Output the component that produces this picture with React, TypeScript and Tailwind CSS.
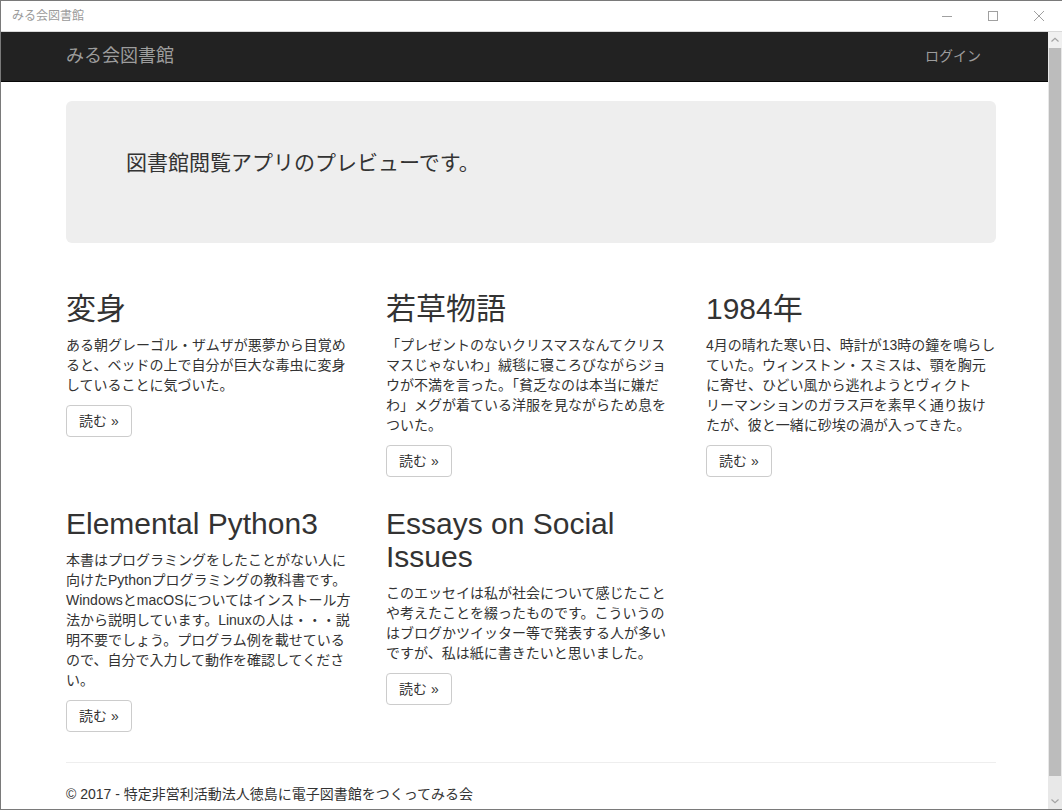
import { Fragment } from 'react'

type Book = {
  title: string
  lines: string[]
}

const books: Book[] = [
  {
    title: '変身',
    lines: [
      'ある朝グレーゴル・ザムザが悪夢から目覚め',
      'ると、ベッドの上で自分が巨大な毒虫に変身',
      'していることに気づいた。',
    ],
  },
  {
    title: '若草物語',
    lines: [
      '「プレゼントのないクリスマスなんてクリス',
      'マスじゃないわ」絨毯に寝ころびながらジョ',
      'ウが不満を言った。「貧乏なのは本当に嫌だ',
      'わ」メグが着ている洋服を見ながらため息を',
      'ついた。',
    ],
  },
  {
    title: '1984年',
    lines: [
      '4月の晴れた寒い日、時計が13時の鐘を鳴らし',
      'ていた。ウィンストン・スミスは、顎を胸元',
      'に寄せ、ひどい風から逃れようとヴィクト',
      'リーマンションのガラス戸を素早く通り抜け',
      'たが、彼と一緒に砂埃の渦が入ってきた。',
    ],
  },
  {
    title: 'Elemental Python3',
    lines: [
      '本書はプログラミングをしたことがない人に',
      '向けたPythonプログラミングの教科書です。',
      'WindowsとmacOSについてはインストール方',
      '法から説明しています。Linuxの人は・・・説',
      '明不要でしょう。プログラム例を載せている',
      'ので、自分で入力して動作を確認してくださ',
      'い。',
    ],
  },
  {
    title: 'Essays on Social Issues',
    lines: [
      'このエッセイは私が社会について感じたこと',
      'や考えたことを綴ったものです。こういうの',
      'はブログかツイッター等で発表する人が多い',
      'ですが、私は紙に書きたいと思いました。',
    ],
  },
]

function TitleBar() {
  return (
    <div className="h-[31px] flex items-center justify-between bg-white border-b border-[#d9d9d9] shrink-0">
      <span className="pl-[11px] text-[12px] text-[#9a9a9a]">みる会図書館</span>
      <div className="flex items-center h-full">
        <div className="w-[46px] h-full flex items-center justify-center">
          <svg width="12" height="12" viewBox="0 0 12 12">
            <path d="M1 6.5h10" stroke="#a0a0a0" strokeWidth="1" />
          </svg>
        </div>
        <div className="w-[46px] h-full flex items-center justify-center">
          <svg width="12" height="12" viewBox="0 0 12 12">
            <rect x="1.5" y="1.5" width="9" height="9" fill="none" stroke="#a0a0a0" strokeWidth="1" />
          </svg>
        </div>
        <div className="w-[46px] h-full flex items-center justify-center">
          <svg width="12" height="12" viewBox="0 0 12 12">
            <path d="M1 1l10 10M11 1L1 11" stroke="#a0a0a0" strokeWidth="1" />
          </svg>
        </div>
      </div>
    </div>
  )
}

function Scrollbar() {
  return (
    <div className="w-[14px] flex flex-col bg-[#e8e8e8] shrink-0">
      <div className="h-[16px] flex items-center justify-center bg-[#f0f0f0]">
        <svg width="8" height="6" viewBox="0 0 8 6">
          <path d="M0.5 4.5L4 1.2L7.5 4.5" fill="none" stroke="#a3a3a3" strokeWidth="1.2" />
        </svg>
      </div>
      <div className="flex-1 bg-[#bcbcbc] mx-[1px]" />
      <div className="h-[17px]" />
      <div className="h-[16px] flex items-center justify-center">
        <svg width="8" height="6" viewBox="0 0 8 6">
          <path d="M0.5 1.5L4 4.8L7.5 1.5" fill="none" stroke="#a3a3a3" strokeWidth="1.2" />
        </svg>
      </div>
    </div>
  )
}

function BookCard({ book }: { book: Book }) {
  return (
    <div>
      <h2 className="mt-[20px] mb-[10px] text-[30px] leading-[33px] font-normal text-[#333]">{book.title}</h2>
      <p className="mb-[10px] text-[14px] leading-[20px] whitespace-nowrap">
        {book.lines.map((line, i) => (
          <Fragment key={i}>
            {i > 0 && <br />}
            {line}
          </Fragment>
        ))}
      </p>
      <p className="mb-[10px]">
        <a className="inline-block px-[12px] py-[5px] text-[14px] leading-[20px] text-[#333] bg-white border border-[#ccc] rounded-[4px]">
          読む »
        </a>
      </p>
    </div>
  )
}

export default function App() {
  return (
    <div className="w-[1062px] h-[810px] flex flex-col overflow-hidden bg-white border-l border-t border-b border-[#7a7a7a] font-['Liberation_Sans','Noto_Sans_CJK_JP',sans-serif] text-[#333]">
      <TitleBar />
      <div className="flex flex-1 min-h-0">
        <div className="flex-1 overflow-hidden">
          {/* Navbar */}
          <header className="h-[50px] bg-[#222] border-b border-[#080808]">
            <div className="ml-[65px] w-[930px] h-full flex items-center justify-between">
              <span className="text-[18px] text-[#9d9d9d]">みる会図書館</span>
              <span className="pr-[15px] text-[14px] text-[#9d9d9d]">ログイン</span>
            </div>
          </header>

          <div className="ml-[65px] w-[930px] pt-[19px]">
            {/* Jumbotron */}
            <div className="bg-[#eee] rounded-[6px] px-[60px] pt-[47px] pb-[50px]">
              <p className="text-[21px] leading-[30px] mb-[15px] font-normal">図書館閲覧アプリのプレビューです。</p>
            </div>

            <div className="grid grid-cols-3 gap-x-[30px] mt-[29px]">
              {books.map((b) => (
                <BookCard key={b.title} book={b} />
              ))}
            </div>

            <hr className="mt-[20px] mb-[21px] border-0 border-t border-[#eee]" />
            <footer>
              <p className="text-[14px] leading-[20px]">© 2017 - 特定非営利活動法人徳島に電子図書館をつくってみる会</p>
            </footer>
          </div>
        </div>
        <Scrollbar />
      </div>
    </div>
  )
}
